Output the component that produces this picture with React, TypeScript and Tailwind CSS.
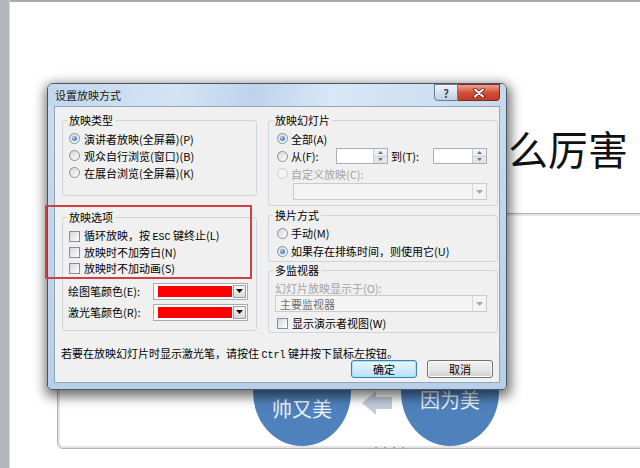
import React from "react";

function Radio({ on, off }: { on?: boolean; off?: boolean }) {
  return (
    <span
      className={`flex h-[11px] w-[11px] shrink-0 items-center justify-center rounded-full border ${
        off ? "border-[#c9cbce] bg-[#f3f3f3]" : "border-[#8a8e94] bg-gradient-to-br from-[#d3d6da] to-white"
      }`}
    >
      {on && <span className="h-[5px] w-[5px] rounded-full bg-[radial-gradient(circle_at_35%_35%,#9fd0f5,#1d5a9c)]" />}
    </span>
  );
}

function Check() {
  return <span className="h-[11px] w-[11px] shrink-0 border border-[#8a8e94] bg-gradient-to-br from-[#d3d6da] to-white" />;
}

function Tri({ gray }: { gray?: boolean }) {
  return (
    <svg width="7" height="4" viewBox="0 0 7 4">
      <path d="M0 0h7L3.5 4z" fill={gray ? "#a8a8a8" : "#111"} />
    </svg>
  );
}

function Spin({ w }: { w: string }) {
  return (
    <div className={`flex h-[16px] ${w} border border-[#abadb3] bg-white`}>
      <div className="flex-1" />
      <div className="flex w-[14px] flex-col border-l border-[#c8ccd2] bg-gradient-to-b from-[#f3f5f8] to-[#dde3ea]">
        <div className="flex flex-1 items-center justify-center border-b border-[#c8ccd2]">
          <svg width="5" height="3" viewBox="0 0 5 3">
            <path d="M0 3h5L2.5 0z" fill="#6b7480" />
          </svg>
        </div>
        <div className="flex flex-1 items-center justify-center">
          <svg width="5" height="3" viewBox="0 0 5 3">
            <path d="M0 0h5L2.5 3z" fill="#6b7480" />
          </svg>
        </div>
      </div>
    </div>
  );
}

function ColorPick() {
  return (
    <div className="flex h-[17px] w-[95px] items-center border border-[#a5acb5] bg-white pl-[4px] pr-[1px]">
      <div className="h-[11px] w-[74px] bg-[#ff0000]" />
      <div className="ml-auto flex h-[13px] w-[13px] items-center justify-center border border-[#9aa2ac] bg-gradient-to-b from-[#f6f6f6] to-[#d9d9d9]">
        <Tri />
      </div>
    </div>
  );
}

function Drop({ text }: { text?: string }) {
  return (
    <div className="flex h-[17px] items-center border border-[#c7cace] bg-[#f4f4f4] text-[#6f6f6f]">
      <span className="pl-[4px]">{text}</span>
      <span className="ml-auto flex h-[15px] w-[14px] items-center justify-center border-l border-[#d6d9dd]">
        <Tri gray />
      </span>
    </div>
  );
}

const mono = "font-['Liberation_Mono',monospace] text-[10px]";

export default function App() {
  return (
    <div className="relative h-[468px] w-[640px] overflow-hidden bg-white font-['Noto_Sans_CJK_SC',sans-serif]">
      <div className="flex h-full">
        <div className="w-[10px] border-r border-[#dadcdf] bg-[#b3b7bd]" />
        <div className="flex-1 border-t-2 border-[#a9abae] bg-white" />
      </div>

      {/* slide canvas */}
      <div className="absolute left-[508px] top-[128px] text-[40px] leading-none text-[#111]">么厉害</div>
      <div className="absolute left-[57px] top-[213px] h-[236px] w-[620px] rounded-[6px] border border-[#b3b3b3] shadow-[inset_0_0_0_2px_#e4e4e4]" />
      <div className="absolute left-[372px] top-[444px] text-[8px] leading-none tracking-[1px] text-[#8a8a8a]">····</div>
      <div className="absolute left-[253px] top-[338px] flex h-[108px] w-[98px] flex-col items-center rounded-[50%] bg-[#4f81bd] pt-[59px] text-[20px] leading-[24px] text-[#eef3f9]">
        <span>帅又美</span>
      </div>
      <div className="absolute left-[401px] top-[338px] flex h-[108px] w-[98px] flex-col items-center rounded-[50%] bg-[#4f81bd] pt-[50px] text-[20px] leading-[24px] text-[#eef3f9]">
        <span>因为美</span>
      </div>
      <svg className="absolute left-[362px] top-[390px]" width="30" height="26" viewBox="0 0 30 26">
        <path d="M0 13 14 1v6h16v12H14v6z" fill="#c3cedb" />
      </svg>

      {/* dialog */}
      <div className="absolute left-[47px] top-[83px] flex h-[307px] w-[460px] flex-col rounded-t-[6px] rounded-b-[4px] border border-[#4b5563] bg-gradient-to-b from-[#c9dcf1] to-[#b8cfe9] text-[11px] leading-[14px] text-black shadow-[1px_4px_12px_3px_rgba(0,0,0,0.55)]">
        <div className="flex h-[22px] items-start rounded-t-[5px] bg-[linear-gradient(100deg,#c2d6ed_0%,#d4e4f5_28%,#bdd3eb_45%,#d9e7f6_62%,#c5d9ee_100%)]">
          <span className="ml-[7px] mt-[4px] text-[#1b1b1b]">设置放映方式</span>
          <div className="ml-auto mr-[6px] flex h-[17px]">
            <div className="flex w-[24px] items-center justify-center rounded-bl-[4px] border border-[#6a7b90] bg-gradient-to-b from-[#f1f5fa] via-[#d8e2ed] to-[#c2d0e1] text-[11px] font-bold text-[#2f4359]">
              ?
            </div>
            <div className="flex w-[42px] items-center justify-center rounded-br-[4px] border border-l-0 border-[#7a2c22] bg-gradient-to-b from-[#eba190] via-[#d2503b] to-[#c23a25]">
              <svg width="12" height="10" viewBox="0 0 12 10">
                <path d="M2 1.5 10 8.5M10 1.5 2 8.5" stroke="#5c1c12" strokeWidth="3.6" strokeLinecap="round" />
                <path d="M2 1.5 10 8.5M10 1.5 2 8.5" stroke="#fff" strokeWidth="2" strokeLinecap="round" />
              </svg>
            </div>
          </div>
        </div>

        <div className="mx-[6px] mb-[6px] flex flex-1 flex-col border border-[#8ea4bf] bg-[#f0f0f0] pl-[7px] pr-[1px] pt-[6px]">
          <div className="flex items-start gap-[11px]">
            {/* left column */}
            <div className="flex w-[195px] flex-col">
              <fieldset className="rounded-[3px] border border-[#d0d5da] p-0">
                <legend className="ml-[4px] px-[2px] leading-[14px]">放映类型</legend>
                <div className="pb-[14px] pl-[6px] pt-[3px]">
                  <div className="flex h-[17px] items-center gap-[4px]">
                    <Radio on />
                    演讲者放映(全屏幕)(P)
                  </div>
                  <div className="flex h-[17px] items-center gap-[4px]">
                    <Radio />
                    观众自行浏览(窗口)(B)
                  </div>
                  <div className="flex h-[17px] items-center gap-[4px]">
                    <Radio />
                    在展台浏览(全屏幕)(K)
                  </div>
                </div>
              </fieldset>

              <fieldset className="mt-[14px] rounded-[3px] border border-[#d0d5da] p-0">
                <legend className="ml-[4px] px-[2px] leading-[14px]">放映选项</legend>
                <div className="pb-[8px] pl-[6px] pt-[4px]">
                  <div className="flex h-[16px] items-center gap-[4px]">
                    <Check />
                    <span>
                      循环放映，按 <span className={mono}>ESC</span> 键终止(L)
                    </span>
                  </div>
                  <div className="flex h-[16px] items-center gap-[4px]">
                    <Check />
                    放映时不加旁白(N)
                  </div>
                  <div className="flex h-[16px] items-center gap-[4px]">
                    <Check />
                    放映时不加动画(S)
                  </div>
                  <div className="-ml-[1px] mt-[5px] flex h-[20px] items-center">
                    <span className="w-[85px]">绘图笔颜色(E):</span>
                    <ColorPick />
                  </div>
                  <div className="-ml-[1px] mt-[1px] flex h-[20px] items-center">
                    <span className="w-[85px]">激光笔颜色(R):</span>
                    <ColorPick />
                  </div>
                </div>
              </fieldset>
            </div>

            {/* right column */}
            <div className="flex w-[230px] flex-col">
              <fieldset className="rounded-[3px] border border-[#d0d5da] p-0">
                <legend className="ml-[4px] px-[2px] leading-[14px]">放映幻灯片</legend>
                <div className="pb-[5px] pl-[8px] pr-[10px] pt-[3px]">
                  <div className="flex h-[17px] items-center gap-[3px]">
                    <Radio on />
                    全部(A)
                  </div>
                  <div className="flex h-[18px] items-center">
                    <Radio />
                    <span className="ml-[3px] w-[45px]">从(F):</span>
                    <Spin w="w-[52px]" />
                    <span className="ml-[3px] w-[42px]">到(T):</span>
                    <Spin w="w-[54px]" />
                  </div>
                  <div className="flex h-[17px] items-center gap-[3px] text-[#a3a3a3]">
                    <Radio off />
                    自定义放映(C):
                  </div>
                  <div className="ml-[16px] mt-[1px]">
                    <Drop />
                  </div>
                </div>
              </fieldset>

              <fieldset className="mt-[2px] rounded-[3px] border border-[#d0d5da] p-0">
                <legend className="ml-[4px] px-[2px] leading-[14px]">换片方式</legend>
                <div className="pb-[1px] pl-[8px] pt-[2px]">
                  <div className="flex h-[18px] items-center gap-[3px]">
                    <Radio />
                    手动(M)
                  </div>
                  <div className="flex h-[18px] items-center gap-[3px]">
                    <Radio on />
                    如果存在排练时间，则使用它(U)
                  </div>
                </div>
              </fieldset>

              <fieldset className="mt-[1px] rounded-[3px] border border-[#d0d5da] p-0">
                <legend className="ml-[4px] px-[2px] leading-[14px]">多监视器</legend>
                <div className="pl-[6px] pr-[10px] pt-[4px]">
                  <div className="h-[14px] text-[#a3a3a3]">幻灯片放映显示于(O):</div>
                  <Drop text="主要监视器" />
                  <div className="mt-[2px] flex h-[18px] items-center gap-[4px] pl-[2px]">
                    <Check />
                    显示演示者视图(W)
                  </div>
                </div>
              </fieldset>
            </div>
          </div>

          <div className="-ml-[1px] mt-[13px] h-[14px]">
            若要在放映幻灯片时显示激光笔，请按住 <span className={mono}>Ctrl</span> 键并按下鼠标左按钮。
          </div>
          <div className="flex justify-end gap-[10px] pr-[5px]">
            <button className="flex h-[18px] w-[66px] items-center justify-center rounded-[3px] border border-[#3c7fb1] bg-gradient-to-b from-[#eaf6fd] to-[#b9e0f7] shadow-[inset_0_0_0_1px_#a6e2fb]">
              确定
            </button>
            <button className="flex h-[18px] w-[66px] items-center justify-center rounded-[3px] border border-[#707070] bg-gradient-to-b from-[#f3f3f3] via-[#e6e6e6] to-[#d0d0d0] shadow-[inset_0_0_0_1px_#fbfbfb]">
              取消
            </button>
          </div>
        </div>

        {/* annotation frame */}
        <div className="absolute left-[-3px] top-[121px] h-[74px] w-[207px] border-2 border-[#d23f42]" />
      </div>
    </div>
  );
}
